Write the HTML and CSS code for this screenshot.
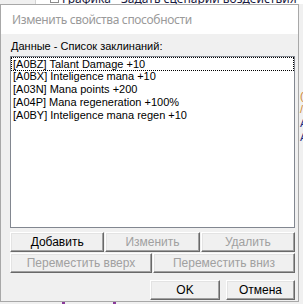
FILE: index.html
```html
<!DOCTYPE html>
<html>
<head>
<meta charset="utf-8">
<link rel="stylesheet" href="styles.css">
</head>
<body>
<div class="desk">
  <div class="behind-top">
    <span class="tree-box"></span>
    <span class="behind-text">Графика - Задать сценарий воздействия</span>
  </div>
  <div class="behind-right">
    <span class="g g-or">(</span>
    <span class="g g-or">/</span>
    <span class="g g-bl">A</span>
    <span class="g g-bl">A</span>
  </div>
  <div class="behind-bottom">
    <span class="mark"></span>
    <span class="mark"></span>
  </div>
  <div class="dialog">
    <div class="titlebar">Изменить свойства способности</div>
    <div class="content">
      <div class="label">Данные - Список заклинаний:</div>
      <div class="listbox">
        <div class="item focused">[A0BZ] Talant Damage +10</div>
        <div class="item">[A0BX] Inteligence mana +10</div>
        <div class="item">[A03N] Mana points +200</div>
        <div class="item">[A04P] Mana regeneration +100%</div>
        <div class="item">[A0BY] Inteligence mana regen +10</div>
      </div>
      <div class="row3">
        <button class="btn">Добавить</button>
        <button class="btn" disabled>Изменить</button>
        <button class="btn" disabled>Удалить</button>
      </div>
      <div class="row2">
        <button class="btn" disabled>Переместить вверх</button>
        <button class="btn" disabled>Переместить вниз</button>
      </div>
      <div class="rowok">
        <button class="btn ok">OK</button>
        <button class="btn cancel">Отмена</button>
      </div>
    </div>
  </div>
</div>
</body>
</html>
```

FILE: styles.css
```css
html, body {
  margin: 0;
  padding: 0;
  background: #f0f0f0;
  overflow: hidden;
}

.desk {
  position: relative;
  width: 303px;
  height: 304px;
  overflow: hidden;
  font-family: "Liberation Sans", Arial, sans-serif;
}

.behind-top {
  position: absolute;
  top: 0;
  left: 35px;
  right: 0;
  height: 4px;
  background: #ffffff;
  border-left: 1px solid #d4d4d4;
  overflow: hidden;
}

.tree-box {
  position: absolute;
  left: 14px;
  top: -6px;
  width: 7px;
  height: 7px;
  border: 1px solid #8c8c8c;
}

.behind-text {
  position: absolute;
  left: 26px;
  top: -8px;
  font-family: "Noto Sans", sans-serif;
  font-size: 12px;
  line-height: 14px;
  color: #1a1a40;
  white-space: nowrap;
}

.behind-right {
  position: absolute;
  left: 299px;
  top: 90px;
  width: 4px;
  display: flex;
  flex-direction: column;
  overflow: hidden;
}

.g {
  font-size: 11px;
  line-height: 13px;
  padding-left: 1px;
}

.g-or { color: #d08a30; }
.g-bl { color: #1a2a80; line-height: 14px; }

.behind-bottom {
  position: absolute;
  left: 0;
  top: 302px;
  width: 303px;
  height: 2px;
  display: flex;
  gap: 48px;
  padding-left: 62px;
}

.mark {
  width: 3px;
  height: 2px;
  background: #8a3a9a;
}

.dialog {
  position: absolute;
  left: 0;
  top: 4px;
  width: 299px;
  height: 298px;
  box-sizing: border-box;
  border: 1px solid #a8a8a8;
  background: #f0f0f0;
}

.titlebar {
  height: 29px;
  line-height: 29px;
  background: #ffffff;
  padding-left: 11px;
  font-family: "Noto Sans", sans-serif;
  font-size: 12px;
  letter-spacing: -0.35px;
  color: #9a9a9a;
  white-space: nowrap;
}

.content {
  padding: 6px 3px 0 9px;
}

.label {
  font-size: 11px;
  line-height: 13px;
  color: #000;
  padding-left: 1px;
}

.listbox {
  margin-top: 3px;
  height: 172px;
  box-sizing: border-box;
  border: 1px solid #828790;
  background: #ffffff;
}

.item {
  height: 13px;
  line-height: 13px;
  font-size: 11px;
  color: #000;
  padding-left: 2px;
  white-space: nowrap;
  box-sizing: border-box;
}

.item.focused {
  outline: 1px dotted #000;
  outline-offset: -1px;
  height: 14px;
  line-height: 14px;
  margin-bottom: -1px;
}

.btn {
  box-sizing: border-box;
  height: 20px;
  margin: 0;
  padding: 0;
  border: 1px solid;
  border-color: #ffffff #696969 #696969 #ffffff;
  box-shadow: inset -1px -1px 0 #a0a0a0, inset 1px 1px 0 #e3e3e3;
  background: #f0f0f0;
  font-family: "Liberation Sans", Arial, sans-serif;
  font-size: 12px;
  color: #000;
}

.btn:disabled {
  color: #a0a0a0;
}

.row3 {
  margin-top: 4px;
  display: grid;
  grid-template-columns: 1fr 1fr 1fr;
  gap: 1px;
}

.row2 {
  margin-top: 1px;
  display: grid;
  grid-template-columns: 1fr 1fr;
  gap: 1px;
}

.rowok {
  margin-top: 7px;
  display: flex;
  justify-content: flex-end;
  gap: 6px;
}

.ok { width: 70px; }
.cancel { width: 69px; }
```
